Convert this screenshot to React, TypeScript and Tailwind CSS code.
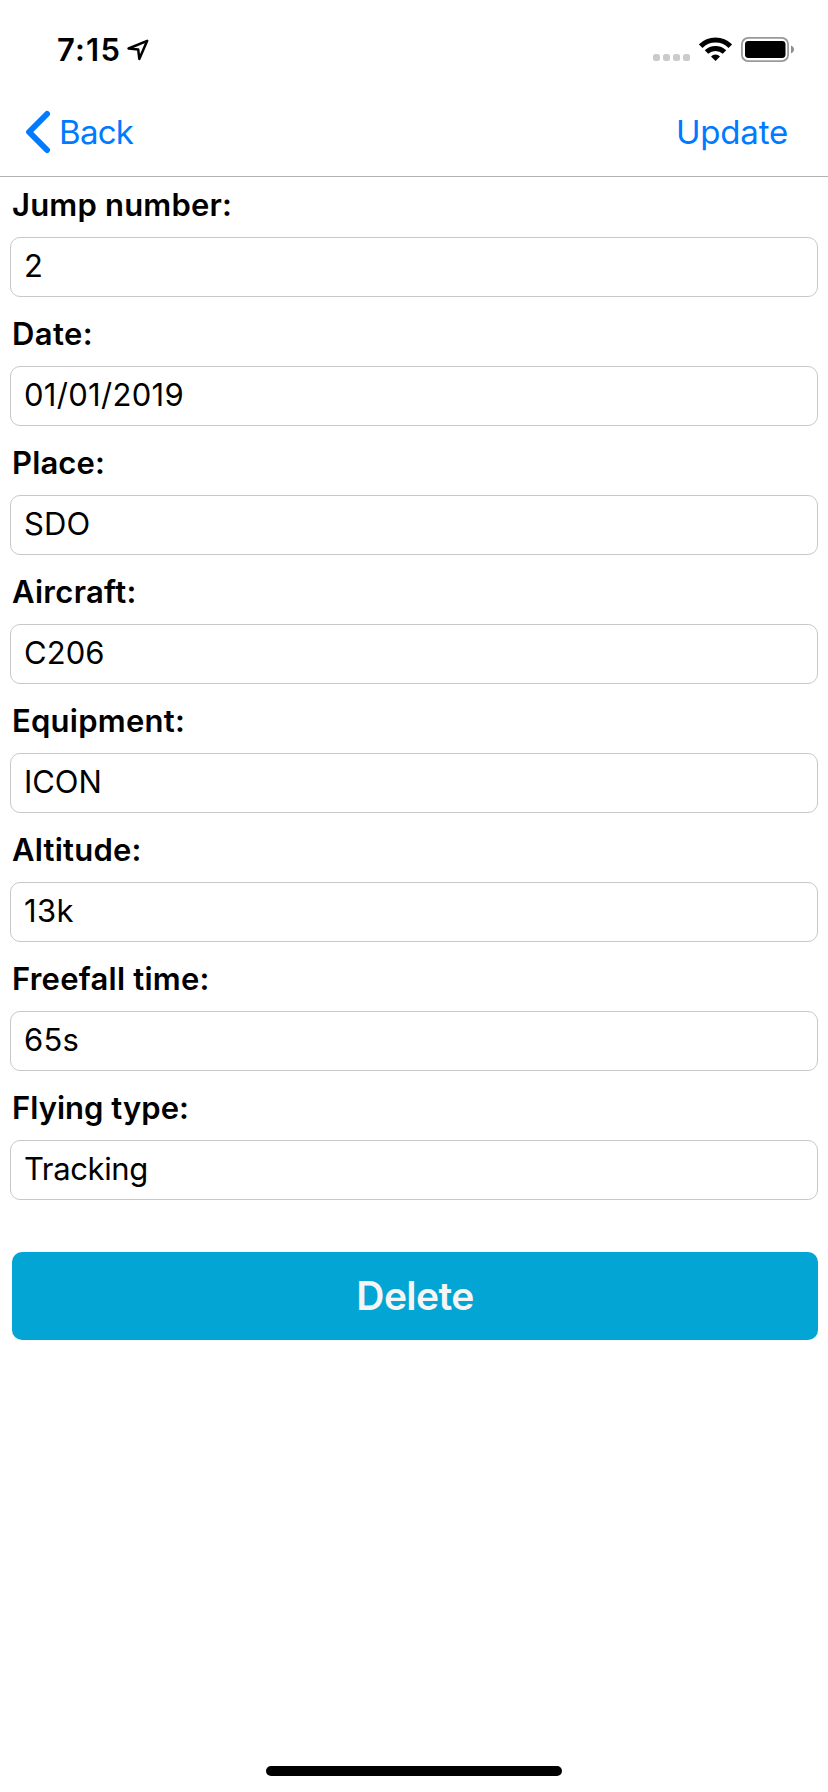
import clsx from 'clsx';

type Field = { label: string; value: string; labelClass: string; valueClass: string };

const fields: Field[] = [
  { label: 'Jump number:', value: '2', labelClass: 'tracking-[0.195px]', valueClass: '' },
  { label: 'Date:', value: '01/01/2019', labelClass: 'tracking-[0.4px]', valueClass: 'tracking-[0.3px]' },
  { label: 'Place:', value: 'SDO', labelClass: 'tracking-[0.14px]', valueClass: 'tracking-[0.12px]' },
  { label: 'Aircraft:', value: 'C206', labelClass: 'tracking-[0.3px]', valueClass: 'tracking-[0.05px]' },
  { label: 'Equipment:', value: 'ICON', labelClass: 'tracking-[0.255px]', valueClass: 'tracking-[-0.06px]' },
  { label: 'Altitude:', value: '13k', labelClass: 'tracking-[0.22px]', valueClass: 'tracking-[0.4px]' },
  { label: 'Freefall time:', value: '65s', labelClass: 'tracking-[0.24px]', valueClass: 'tracking-[0.2px]' },
  { label: 'Flying type:', value: 'Tracking', labelClass: 'tracking-[0.033px]', valueClass: 'tracking-[-0.38px]' },
];

function StatusBar() {
  return (
    <div className="flex h-[88px] items-start justify-between pl-[57px] pr-[34px]">
      <div className="flex items-start">
        <span className="mt-[30px] w-[70px] text-[31px] leading-[40px] font-semibold tracking-[1.2px] whitespace-nowrap">7:15</span>
        <svg className="mt-[39px] h-[22px] w-[22px]" viewBox="0 0 22 22" fill="none" stroke="black" strokeWidth="2.5" strokeLinejoin="round">
          <path d="M20.2 1.8 1.6 9.5 11.2 10.5 12.3 19.9Z" />
        </svg>
      </div>
      <div className="flex items-start">
        <div className="mt-[54px] flex gap-[3px]">
          {[0, 1, 2, 3].map((n) => (
            <span key={n} className="size-[7px] rounded-[2.5px] bg-[#cbcbcb]" />
          ))}
        </div>
        <svg className="mt-[37px] ml-[9px] h-[24px] w-[33px]" viewBox="0 0 33 24">
          <g fill="none" stroke="black" strokeWidth="5">
            <path d="M1.7 9.2A20.8 20.8 0 0 1 31.3 9.2" />
            <path d="M7.5 15A13 13 0 0 1 25.5 15" />
          </g>
          <path d="M16.5 24 12 19.4A6.4 6.4 0 0 1 21 19.4Z" />
        </svg>
        <svg className="mt-[37px] ml-[9px] h-[25px] w-[53px]" viewBox="0 0 53 25">
          <rect x="0.9" y="0.9" width="46.2" height="23.2" rx="6.3" fill="none" stroke="#999" strokeWidth="1.8" />
          <rect x="4" y="4" width="40.5" height="17" rx="3.4" />
          <path d="M50 8.6C51.9 9.3 53 10.8 53 12.5S51.9 15.7 50 16.4Z" fill="#8e8e8e" />
        </svg>
      </div>
    </div>
  );
}

function NavBar() {
  return (
    <div className="flex h-[89px] items-start justify-between border-b border-[#b2b2b2] pr-[40px] pl-[25px] text-[33px] leading-[88px] text-[#007aff]">
      <button className="flex items-start">
        <svg className="mt-[22px] h-[44px] w-[26px]" viewBox="0 0 26 44" fill="none" stroke="#007aff" strokeWidth="6" strokeLinecap="round" strokeLinejoin="round">
          <path d="M22 4 4.1 22 22 40" />
        </svg>
        <span className="ml-[8px] tracking-[-0.7px]">Back</span>
      </button>
      <button className="tracking-[-0.2px]">Update</button>
    </div>
  );
}

export default function App() {
  return (
    <div className="flex h-[1792px] w-[828px] flex-col bg-white font-['Inter','Liberation_Sans',sans-serif] text-black">
      <StatusBar />
      <NavBar />
      <main className="flex-1 px-[10px]">
        {fields.map((field) => (
          <label key={field.label} className="mb-[9px] block text-[31px]">
            <span className={clsx('mb-1 block h-14 pl-[2px] leading-[56px] font-semibold', field.labelClass)}>{field.label}</span>
            <input
              readOnly
              value={field.value}
              className={clsx('block h-[60px] w-full rounded-[10px] border border-[#c8c8c8] bg-white pt-0 pr-4 pb-1 pl-[13px] outline-none', field.valueClass)}
            />
          </label>
        ))}
        <button className="mt-[52px] ml-[2px] block h-[88px] w-[806px] rounded-[10px] bg-[#02a5d3] text-[39px] font-semibold tracking-[-0.6px] text-[#f5f5f5]">
          Delete
        </button>
      </main>
      <div className="mx-auto mb-[16px] h-[10px] w-[296px] rounded-full bg-black" />
    </div>
  );
}
